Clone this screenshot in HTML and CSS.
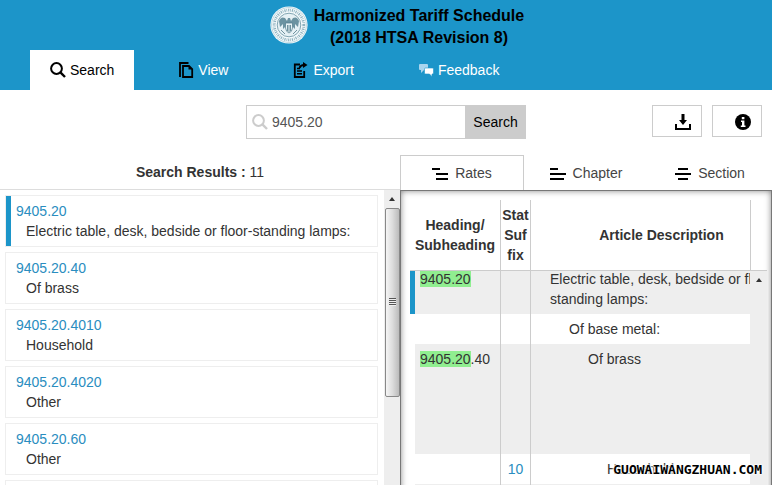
FILE: index.html
```html
<!DOCTYPE html>
<html lang="en">
<head>
    <meta charset="UTF-8">
    <meta name="viewport" content="width=device-width, initial-scale=1.0">
    <title>Harmonized Tariff Schedule</title>
    <link rel="stylesheet" href="styles.css">
</head>
<body>
    <header class="site-header">
        <div class="brand">
            <svg class="seal" viewBox="0 0 38 38" aria-hidden="true">
                <circle cx="19" cy="19" r="18.6" fill="#f4fafc"/>
                <circle cx="19" cy="19" r="17.4" fill="none" stroke="#9dbfcb" stroke-width="0.6"/>
                <circle cx="19" cy="19" r="14.8" fill="none" stroke="#8fb2bf" stroke-width="2.8" stroke-dasharray="1.2 0.9 0.7 1"/>
                <circle cx="19" cy="19" r="11.8" fill="#e6f1f5" stroke="#66909f" stroke-width="0.8"/>
                <path d="M9 15q2-5 6-3l2 3 1-3h2l1 3 2-3q4-2 6 3l-1 6-3-3v5l-3-3-1 6h-4l-1-6-3 3v-5l-3 3z" fill="#6c93a1"/>
                <path d="M15.500 17h7v5q-.5 4-3.500 5-3-1-3.500-5z" fill="#e8f3f6" stroke="#507a89" stroke-width="0.7"/>
                <path d="M17.500 19v6M19 19v7M20.500 19v6M11 24l4 4M27 24l-4 4" stroke="#507a89" stroke-width="0.8"/>
            </svg>
            <h1>Harmonized Tariff Schedule<br>(2018 HTSA Revision 8)</h1>
        </div>
        <nav class="main-nav">
            <a href="#search" class="active">
                <svg width="16" height="16" viewBox="0 0 16 16" fill="none" stroke="#000"><circle cx="6.5" cy="6.5" r="5.4" stroke-width="2"/><path d="M10.4 10.4l4.6 4.6" stroke-width="2.4"/></svg>
                Search
            </a>
            <a href="#view">
                <svg width="15" height="16" viewBox="0 0 15 16" fill="none" stroke="#000"><path d="M1 15V1h8.500" stroke-width="1.800"/><path d="M4 4h6l3.200 3.200V15H4z" stroke-width="1.800"/><path d="M9.500 3.500v4h4z" fill="#000" stroke="none"/></svg>
                View
            </a>
            <a href="#export">
                <svg width="16" height="16" viewBox="0 0 16 16" fill="none" stroke="#000"><path d="M7 2.500H1.800V15h9.400V9" stroke-width="1.800"/><path d="M4 6.500h3M4 9h5M4 11.800h5" stroke-width="1.400"/><path d="M6.500 6q1-3 4.500-3" stroke-width="2"/><path d="M10 0l4.500 3L10 6z" fill="#000" stroke="none"/></svg>
                Export
            </a>
            <a href="#feedback">
                <svg width="15" height="13" viewBox="0 0 15 13"><path d="M1 0h7q1 0 1 1v4q0 1-1 1H5L2 9V6H1Q0 6 0 5V1q0-1 1-1z" fill="#a9d5ee"/><path d="M6.500 4h7q1 0 1 1v4q0 1-1 1H13v2.500L10.500 10h-4q-1 0-1-1V5q0-1 1-1z" fill="#fff" stroke="#1c95c9" stroke-width="0.600"/></svg>
                Feedback
            </a>
        </nav>
    </header>

    <div class="toolbar">
        <form class="search-form">
            <label class="search-box">
                <svg width="16" height="16" viewBox="0 0 16 16" fill="none" stroke="#ccc"><circle cx="6.500" cy="6.500" r="5.400" stroke-width="2"/><path d="M10.400 10.400l4.600 4.600" stroke-width="2.400"/></svg>
                <input type="text" value="9405.20" aria-label="Search the schedule">
            </label>
            <button type="button">Search</button>
        </form>
        <div class="tools">
            <button type="button" aria-label="Download">
                <svg width="16" height="16" viewBox="0 0 16 16"><path d="M6.500 0h3v6H12l-4 5-4-5h2.500z"/><path d="M0 10h2v4h12v-4h2v6H0z"/></svg>
            </button>
            <button type="button" aria-label="Information">
                <svg width="16" height="16" viewBox="0 0 16 16"><circle cx="8" cy="8" r="8"/><path d="M6.800 3h2.600v2.200H6.800zM6 6.500h3.400v5H10.500V13H5.800v-1.500H7V8H6z" fill="#fff"/></svg>
            </button>
        </div>
    </div>

    <main class="columns">
        <section class="results">
            <h2><b>Search Results :</b> 11</h2>
            <div class="results-body">
                <ul class="result-list">
                    <li class="selected"><a href="#r1">9405.20</a><p>Electric table, desk, bedside or floor-standing lamps:</p></li>
                    <li><a href="#r2">9405.20.40</a><p>Of brass</p></li>
                    <li><a href="#r3">9405.20.4010</a><p>Household</p></li>
                    <li><a href="#r4">9405.20.4020</a><p>Other</p></li>
                    <li><a href="#r5">9405.20.60</a><p>Other</p></li>
                    <li></li>
                </ul>
                <div class="scrollbar">
                    <svg class="arrow" width="6" height="4" viewBox="0 0 6 4"><path d="M3 0l3 4H0z"/></svg>
                    <div class="thumb"><span class="grip"></span></div>
                </div>
            </div>
        </section>

        <section class="detail">
            <nav class="tabs">
                <a href="#rates" class="active">
                    <svg width="16" height="12" viewBox="0 0 16 12"><path d="M0 0h8v2H0zM4 5h12v2H4zM4 10h12v2H4z"/></svg>
                    Rates
                </a>
                <a href="#chapter">
                    <svg width="16" height="12" viewBox="0 0 16 12"><path d="M0 0h8v2H0zM0 5h16v2H0zM0 10h14v2H0z"/></svg>
                    Chapter
                </a>
                <a href="#section">
                    <svg width="16" height="12" viewBox="0 0 16 12"><path d="M3 0h10v2H3zM0 5h16v2H0zM3 10h10v2H3z"/></svg>
                    Section
                </a>
            </nav>
            <div class="panel">
                <div class="table-head">
                    <div class="clip">
                        <table class="rates">
                            <thead>
                                <tr>
                                    <th class="code">Heading/ Subheading</th>
                                    <th class="stat">Stat Suf fix</th>
                                    <th class="article">Article Description</th>
                                </tr>
                            </thead>
                        </table>
                    </div>
                </div>
                <div class="table-body">
                    <div class="clip">
                        <table class="rates scrolled">
                            <tbody>
                                <tr class="selected">
                                    <td class="code"><mark>9405.20</mark></td>
                                    <td class="stat"></td>
                                    <td class="article">Electric table, desk, bedside or floor-<br>standing lamps:</td>
                                </tr>
                                <tr>
                                    <td class="code"></td>
                                    <td class="stat"></td>
                                    <td class="article level-1">Of base metal:</td>
                                </tr>
                                <tr class="tall">
                                    <td class="code"><mark>9405.20</mark>.40</td>
                                    <td class="stat"></td>
                                    <td class="article level-2">Of brass</td>
                                </tr>
                                <tr>
                                    <td class="code"></td>
                                    <td class="stat"><a href="#s10">10</a></td>
                                    <td class="article level-3">Household</td>
                                </tr>
                                <tr>
                                    <td class="code"></td>
                                    <td class="stat"></td>
                                    <td class="article"></td>
                                </tr>
                            </tbody>
                        </table>
                    </div>
                    <div class="scrollbar">
                        <svg class="arrow" width="6" height="4" viewBox="0 0 6 4"><path d="M3 0l3 4H0z"/></svg>
                    </div>
                </div>
            </div>
        </section>
    </main>
    <div class="watermark">GUOWAIWANGZHUAN.COM</div>
</body>
</html>
```

FILE: styles.css
```css
* {
    box-sizing: border-box;
}
body {
    margin: 0;
    height: 100vh;
    display: flex;
    flex-direction: column;
    overflow: hidden;
    position: relative;
    font: 14px/20px "Liberation Sans", Arial, sans-serif;
    color: #333;
    background: #fff;
}
h1, h2, p, ul {
    margin: 0;
    padding: 0;
}
a {
    color: #2a8dc0;
    text-decoration: none;
}
button, input {
    font: inherit;
}

/* header */
.site-header {
    background: #1c95c9;
}
.brand {
    display: flex;
    justify-content: center;
    align-items: center;
    gap: 6px;
    height: 50px;
    padding-left: 22px;
}
.brand h1 {
    padding-top: 4px;
    font-size: 16px;
    line-height: 22px;
    text-align: center;
    color: #000;
}
.seal {
    width: 38px;
    height: 38px;
}
.main-nav {
    display: flex;
    gap: 25px;
    padding-left: 30px;
}
.main-nav a {
    display: flex;
    align-items: center;
    gap: 4px;
    height: 40px;
    padding: 0 20px;
    color: #fff;
}
.main-nav a.active {
    background: #fff;
    color: #000;
}

/* search row */
.toolbar {
    display: grid;
    grid-template-columns: 1fr 280px 1fr;
    padding: 15px 10px 16px;
}
.search-form {
    grid-column: 2;
    display: flex;
    height: 34px;
}
.search-box {
    flex: 1;
    display: flex;
    align-items: center;
    gap: 4px;
    min-width: 0;
    padding: 0 5px;
    border: 1px solid #ccc;
    border-right: 0;
}
.search-box input {
    flex: 1;
    min-width: 0;
    padding: 0;
    border: 0;
    outline: 0;
    color: #555;
}
.search-form button {
    width: 61px;
    padding: 0;
    border: 0;
    background: #ccc;
    color: #000;
}
.tools {
    display: flex;
    justify-content: flex-end;
    gap: 10px;
}
.tools button {
    display: flex;
    justify-content: flex-end;
    align-items: center;
    width: 50px;
    height: 32px;
    padding: 2px 10px 0;
    border: 1px solid #ccc;
    background: #fff;
}

/* columns */
.columns {
    flex: 1;
    min-height: 0;
    display: grid;
    grid-template-columns: 400fr 372fr;
}
.results, .detail {
    display: flex;
    flex-direction: column;
    min-width: 0;
    min-height: 0;
}
.results h2 {
    height: 35px;
    border-bottom: 1px solid #ddd;
    font-size: 14px;
    font-weight: normal;
    line-height: 34px;
    text-align: center;
}
.results-body {
    flex: 1;
    min-height: 0;
    display: flex;
}
.result-list {
    flex: 1;
    padding: 5px 6px 0 5px;
    overflow: hidden;
    list-style: none;
}
.result-list li {
    height: 52px;
    margin-bottom: 5px;
    padding: 5px 10px;
    border: 1px solid #eee;
}
.result-list li.selected {
    box-shadow: inset 5px 0 #1c95c9;
}
.result-list p {
    padding-left: 10px;
    white-space: nowrap;
}

/* scrollbars */
.scrollbar {
    flex: none;
    display: flex;
    flex-direction: column;
    align-items: center;
    width: 16px;
    background: #eee;
}
.arrow {
    flex: none;
    margin: 7px 0;
    fill: #333;
}
.thumb {
    display: flex;
    justify-content: center;
    align-items: center;
    width: 15px;
    height: 64%;
    border: 1px solid #888;
    border-radius: 2px;
    background: linear-gradient(to right, #f5f5f5, #dcdcdc 50%, #bbb);
}
.grip {
    width: 7px;
    height: 8px;
    background: repeating-linear-gradient(#555 0 1px, #eee 1px 2px);
}

/* detail panel */
.tabs {
    display: grid;
    grid-template-columns: repeat(3, 1fr);
    height: 35px;
}
.tabs a {
    display: flex;
    justify-content: center;
    align-items: center;
    gap: 7px;
    color: #444;
}
.tabs a.active {
    border: 1px solid #ccc;
    border-bottom: 0;
}
.tabs svg {
    margin-top: 2px;
}
.panel {
    flex: 1;
    min-height: 0;
    display: flex;
    flex-direction: column;
    margin-bottom: -12px;
    padding: 10px 5px 0 10px;
    box-shadow: inset 1px 1px 0 #777, inset -1px 0 0 #777, inset 0 0 7px #666;
}
.table-head {
    padding-right: 16px;
    border-bottom: 1px solid #ccc;
}
.table-head .clip {
    border-right: 1px solid #ccc;
}
.table-body {
    flex: 1;
    min-height: 0;
    display: flex;
}
.table-body .scrollbar {
    width: 17px;
}
.clip {
    flex: 1;
    min-width: 0;
    overflow: hidden;
}
.rates {
    width: 383px;
    table-layout: fixed;
    border-spacing: 0;
}
.rates th, .rates td {
    padding: 5px 0;
    border-right: 1px solid #ccc;
    vertical-align: top;
    background-clip: padding-box;
}
.rates th {
    padding: 0;
    height: 70px;
    vertical-align: middle;
}
.rates .code {
    width: 91px;
}
.rates td.code {
    padding-left: 5px;
    border-left: 5px solid transparent;
}
.rates .stat {
    width: 30px;
    text-align: center;
}
.rates td {
    height: 30px;
}
.rates td.article {
    padding-left: 19px;
    white-space: nowrap;
}
.rates td.level-1 {
    padding-left: 38px;
}
.rates td.level-2 {
    padding-left: 57px;
}
.rates td.level-3 {
    padding-left: 76px;
}
.rates tbody tr:nth-child(odd) td {
    background-color: #eee;
}
.rates .tall td {
    height: 110px;
}
.rates .selected td.code {
    border-left-color: #1c95c9;
}
.scrolled {
    margin-top: -7px;
}
mark {
    background: #90ee90;
    color: inherit;
}

.watermark {
    position: absolute;
    right: 10px;
    bottom: 5px;
    font: bold 13px/20px "DejaVu Sans Mono", monospace;
    color: #000;
    text-shadow: 0 0 2px #fff, 0 0 2px #fff, 0 0 3px #fff, 0 0 3px #fff;
}
```
